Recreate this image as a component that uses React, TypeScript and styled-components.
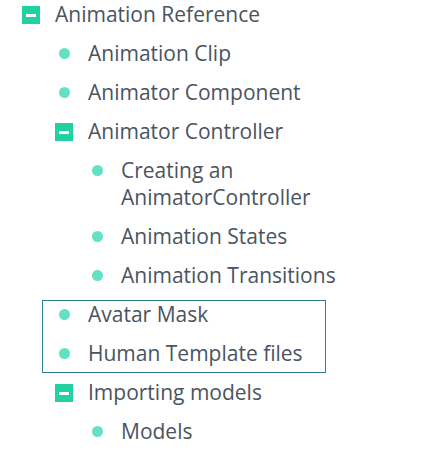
import React from "react";
import styled, { createGlobalStyle } from "styled-components";

const Global = createGlobalStyle`
  html, body { margin: 0; padding: 0; background: #ffffff; }
  body { font-family: "Open Sans", "Noto Sans", sans-serif; }
`;

const Tree = styled.ul`
  list-style: none;
  margin: 0;
  padding: 1px 0 0 22px;
  width: 390px;
  box-sizing: border-box;
  display: flex;
  flex-direction: column;
  gap: 12px;
  font-size: 21px;
  line-height: 27px;
  color: #4a5460;
`;

const Children = styled.ul`
  list-style: none;
  margin: 12px 0 0 33px;
  padding: 0;
  display: flex;
  flex-direction: column;
  gap: 12px;
`;

const Item = styled.li`
  display: flex;
  flex-direction: column;
`;

const Row = styled.div`
  display: flex;
  align-items: flex-start;
`;

const Marker = styled.span`
  flex: 0 0 18px;
  height: 27px;
  margin-right: 15px;
  display: flex;
  align-items: center;
  justify-content: center;
`;

const Box = styled.span`
  position: relative;
  width: 18px;
  height: 18px;
  background: #22d1a1;
  &::after {
    content: "";
    position: absolute;
    left: 4px;
    right: 4px;
    top: 8px;
    height: 3px;
    background: #ffffff;
  }
`;

const Dot = styled.span`
  width: 11px;
  height: 11px;
  border-radius: 50%;
  background: #64e1c3;
`;

const Label = styled.span`
  flex: 1;
`;

const Group = styled.li`
  list-style: none;
  margin: -1px 0 -6px -13px;
  padding: 0 0 5px 12px;
  width: 284px;
  box-sizing: border-box;
  border: 1px solid #2f7f98;
  display: flex;
  flex-direction: column;
  gap: 12px;
`;

type Node = { label: string; children?: Node[] };

const Leaf: React.FC<{ label: string }> = ({ label }) => (
  <Row>
    <Marker>
      <Dot />
    </Marker>
    <Label>{label}</Label>
  </Row>
);

const Branch: React.FC<{ node: Node }> = ({ node }) => (
  <Item>
    <Row>
      <Marker>{node.children ? <Box /> : <Dot />}</Marker>
      <Label>{node.label}</Label>
    </Row>
    {node.children && (
      <Children>
        {node.children.map((c) => (
          <Branch key={c.label} node={c} />
        ))}
      </Children>
    )}
  </Item>
);

export default function App() {
  return (
    <>
      <Global />
      <Tree>
        <Item>
          <Row>
            <Marker>
              <Box />
            </Marker>
            <Label>Animation Reference</Label>
          </Row>
          <Children>
            <Branch node={{ label: "Animation Clip" }} />
            <Branch node={{ label: "Animator Component" }} />
            <Branch
              node={{
                label: "Animator Controller",
                children: [
                  { label: "Creating an AnimatorController" },
                  { label: "Animation States" },
                  { label: "Animation Transitions" },
                ],
              }}
            />
            <Group>
              <Leaf label="Avatar Mask" />
              <Leaf label="Human Template files" />
            </Group>
            <Branch
              node={{
                label: "Importing models",
                children: [{ label: "Models" }],
              }}
            />
          </Children>
        </Item>
      </Tree>
    </>
  );
}
